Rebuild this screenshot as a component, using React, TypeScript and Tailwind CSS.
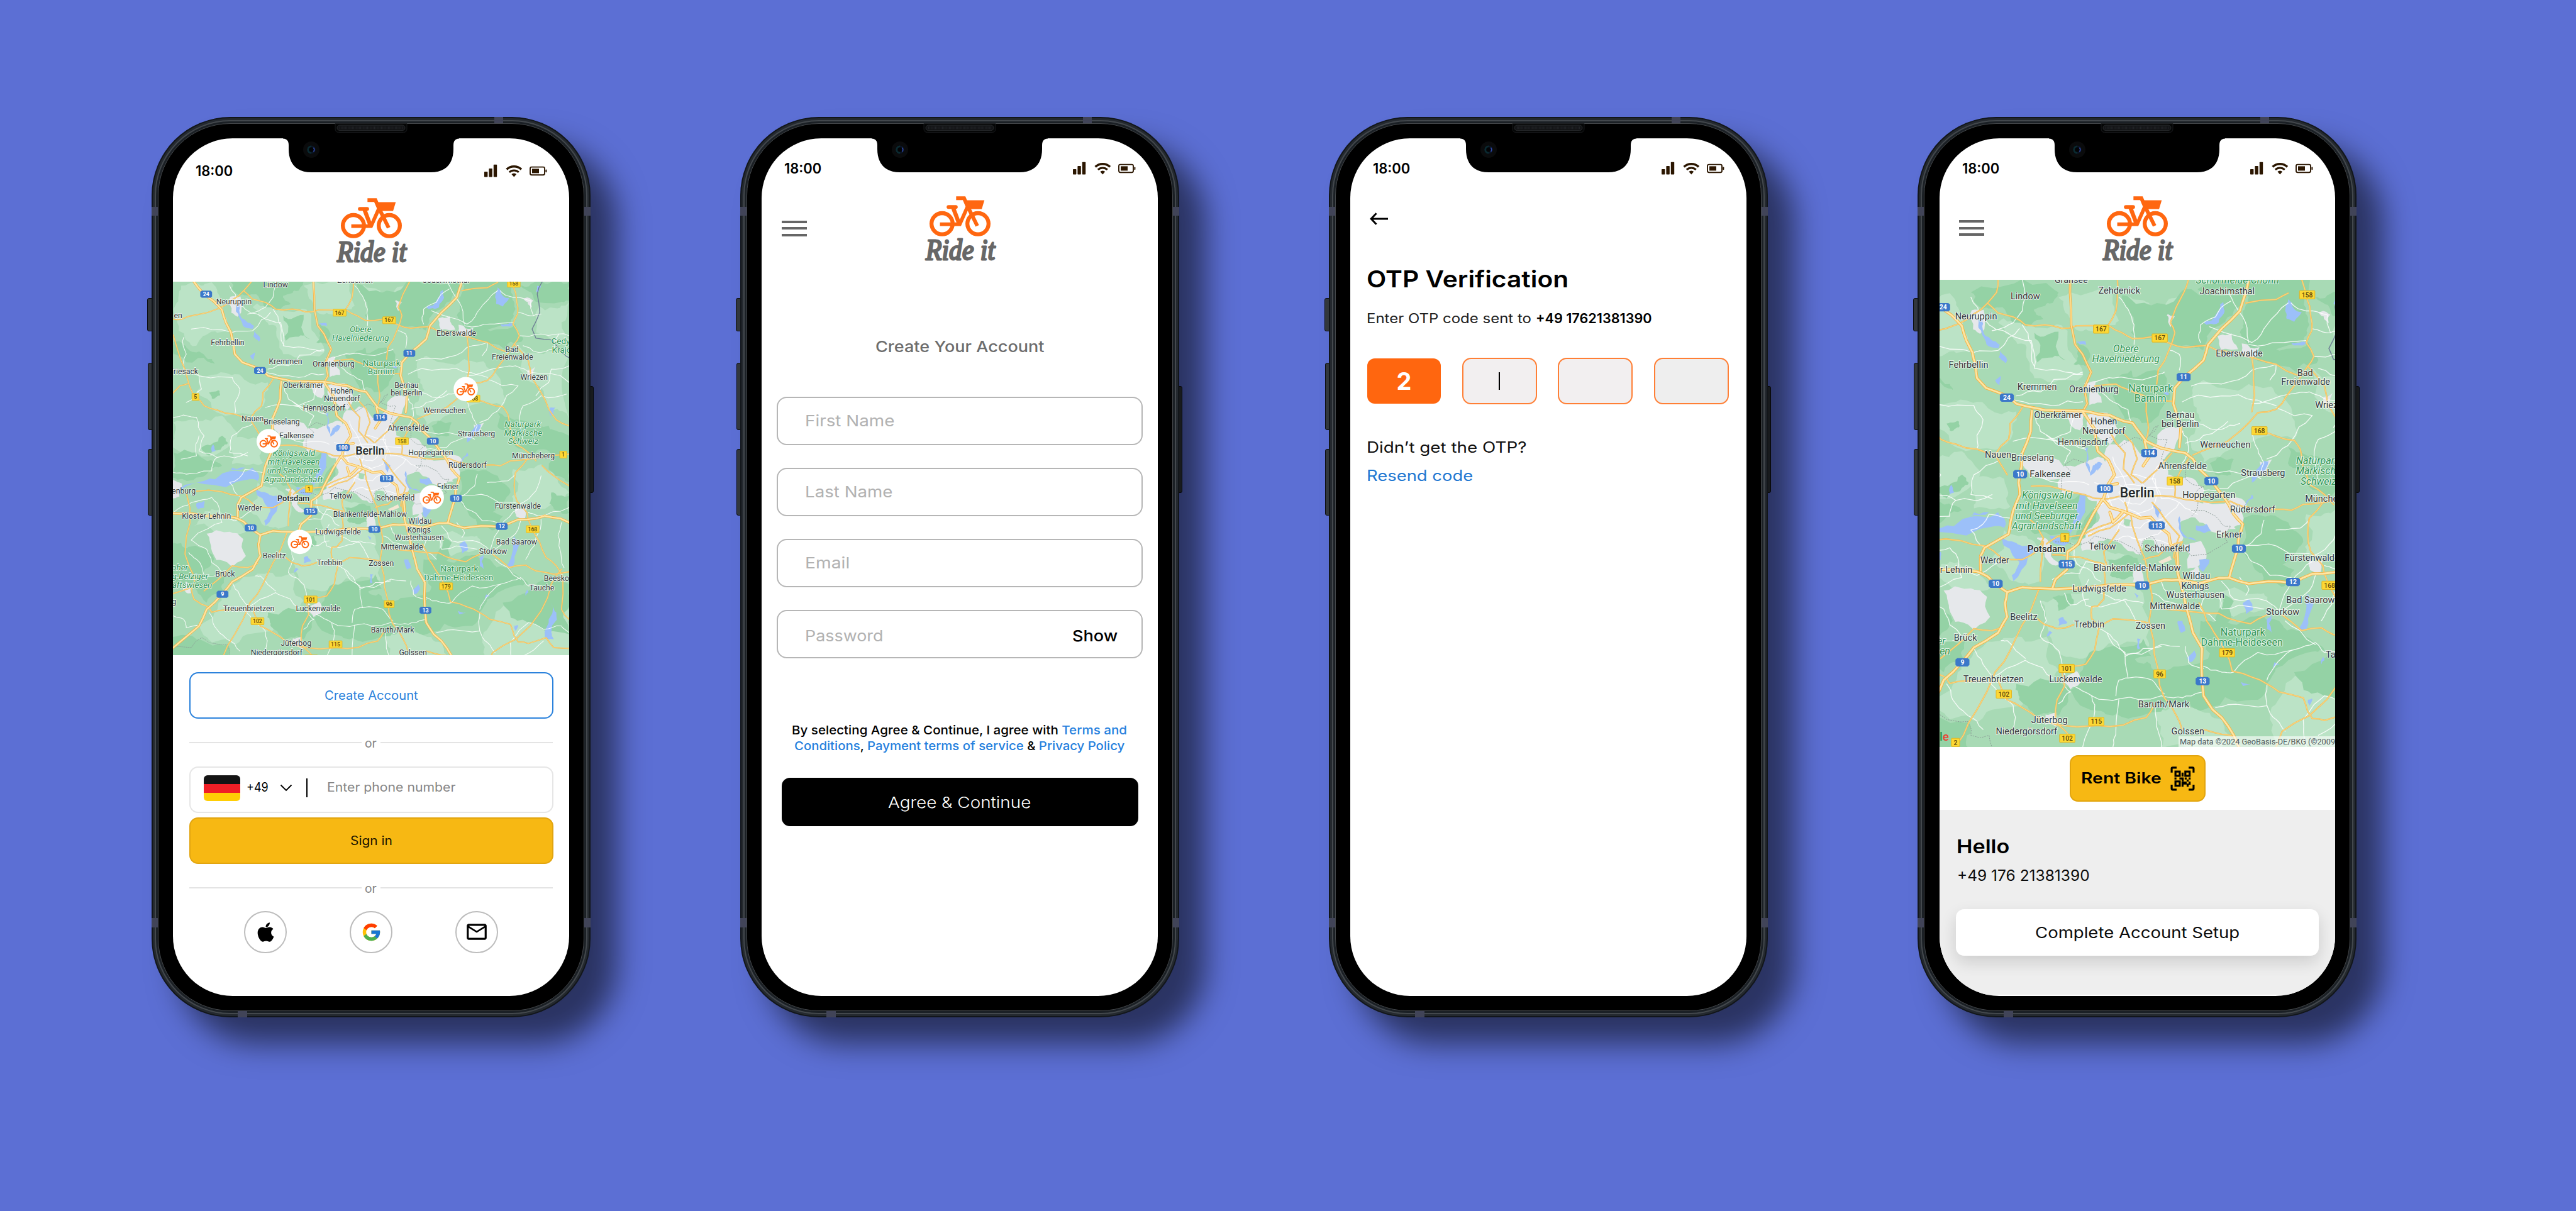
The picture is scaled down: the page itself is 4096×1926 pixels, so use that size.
import { useLayoutEffect, useRef, useState } from "react";
import type { ReactNode } from "react";
import { FaApple } from "react-icons/fa";
import { FcGoogle } from "react-icons/fc";
import { MdOutlineMailOutline } from "react-icons/md";

/* ---------- text that is widened to an exact measure ---------- */
function Fit({ w, className = "", children }: { w: number; className?: string; children: ReactNode }) {
  const ref = useRef<HTMLSpanElement>(null);
  const [scale, setScale] = useState(1);
  useLayoutEffect(() => {
    const el = ref.current;
    if (el && el.offsetWidth) setScale(w / el.offsetWidth);
  }, [w]);
  return (
    <span className={"inline-flex shrink-0 justify-start " + className} style={{ width: w }}>
      <span ref={ref} className="block shrink-0 origin-left whitespace-pre" style={{ transform: `scaleX(${scale})` }}>
        {children}
      </span>
    </span>
  );
}

/* ---------- map ---------- */
const KX = 1.96;
const KY = 3;
type Pt = [number, number];

const noise = (a: number, b: number, s: number) => {
  const v = Math.sin(a * 12.9898 + b * 78.233 + s * 37.719) * 43758.5453;
  return v - Math.floor(v) - 0.5;
};

const parse = (s: string): Pt[] => {
  const n = s.split(/[ ,]+/).map(Number);
  const out: Pt[] = [];
  for (let i = 0; i + 1 < n.length; i += 2) out.push([n[i] / KX, n[i + 1] / KY]);
  return out;
};

const rough = (pts: Pt[], amp: number, closed: boolean, depth: number): Pt[] => {
  let cur = pts;
  for (let d = 0; d < depth; d++) {
    const out: Pt[] = [];
    const len = closed ? cur.length : cur.length - 1;
    for (let i = 0; i < len; i++) {
      const a = cur[i];
      const b = cur[(i + 1) % cur.length];
      const L = Math.hypot(b[0] - a[0], b[1] - a[1]);
      out.push(a, [
        (a[0] + b[0]) / 2 + noise(a[0], b[1], 1) * L * amp,
        (a[1] + b[1]) / 2 + noise(a[1], b[0], 2) * L * amp,
      ]);
    }
    if (!closed) out.push(cur[cur.length - 1]);
    cur = out;
  }
  return cur;
};

const str = (p: Pt[]) => p.map((q) => q[0].toFixed(1) + "," + q[1].toFixed(1)).join(" ");
const area = (s: string, amp = 0.4, depth = 3) => str(rough(parse(s), amp, true, depth));
const line = (s: string, amp = 0.12, depth = 1) => str(rough(parse(s), amp, false, depth));

const LIGHT = [
  "40,60 160,40 200,230 230,330 100,420 30,330 10,200",
  "320,190 430,200 550,230 600,460 440,470 410,300",
  "110,600 250,590 380,640 350,800 180,820 100,700",
  "1000,480 1150,500 1260,560 1300,780 1150,800 1000,700 960,560",
  "200,960 340,980 360,1120 240,1130",
  "1360,420 1460,470 1560,480 1560,860 1480,800 1430,650",
  "460,1600 600,1560 800,1560 820,1830 640,1860 500,1820",
  "200,1900 330,1800 480,1780 520,1950 440,2060 300,2150 160,2200 110,2100",
  "1340,1160 1450,1130 1560,1300 1450,1400 1340,1360",
  "1040,1560 1200,1560 1230,1640 1100,1680",
  "840,2160 960,2140 1060,2200 1100,2300 860,2340",
  "520,60 700,50 720,180 620,230 560,200",
  "1440,180 1560,160 1560,400 1430,340",
  "10,880 100,870 200,840 260,1000 100,1060 0,1020",
  "560,1300 650,1310 760,1370 680,1420 580,1420",
  "740,60 820,90 840,230 770,240",
  "1290,2000 1400,1960 1560,1980 1560,2340 1280,2340 1220,2200",
  "160,1400 250,1460 300,1530 180,1540 90,1500",
  "880,80 900,200 920,60",
  "1040,560 1100,800 1000,900 950,780",
  "600,1420 780,1480 760,1700 640,1660",
  "340,1240 440,1300 460,1500 380,1500 300,1400",
];

const DARK = [
  "230,36 520,36 500,90 440,120 470,170 400,200 350,150 290,110",
  "730,50 890,90 960,20 1130,40 1100,130 1010,260 1000,330 900,300 860,260 760,240",
  "1150,60 1330,60 1350,200 1330,290 1170,320 1120,240 1130,150",
  "10,400 60,430 160,500 170,530 60,520 10,470",
  "440,240 520,235 545,380 450,390",
  "580,290 620,330 610,410 570,400",
  "1160,330 1350,285 1380,380 1310,440 1200,390",
  "1280,820 1400,880 1480,900 1500,1050 1400,1060 1320,960",
  "1370,60 1450,30 1560,36 1560,150 1440,160",
  "430,1040 590,1060 610,1150 560,1280 440,1260 380,1200",
  "10,1060 130,1100 200,1140 100,1210 0,1200",
  "640,1850 760,1880 840,1950 1000,1900 1200,1850 1280,1880 1220,2000 1160,2100 1000,2150 860,2160 700,2180 560,2050 600,1950",
  "990,1700 1110,1720 1250,1700 1330,1760 1400,1850 1280,1900 1100,1950 1000,1940",
  "380,2020 560,2040 520,2180 440,2180 390,2100",
  "10,1600 90,1620 170,1700 130,1850 0,1870",
  "90,1850 210,1800 200,1900 140,1960",
  "1130,1180 1280,1200 1330,1300 1250,1440 1170,1440 1130,1320",
  "1460,940 1560,960 1560,1240 1480,1160",
  "-40,2170 100,2180 230,2240 220,2340 -40,2340",
  "680,1390 760,1370 800,1450 740,1490 690,1470",
  "1300,1960 1500,1820 1560,1850 1560,2150 1400,2080",
  "700,560 870,450 890,560 820,700 740,680",
  "680,470 760,430 780,500 700,540",
  "1190,1450 1300,1440 1290,1500 1200,1500",
  "620,1160 660,1090 600,1280 560,1290",
  "720,1830 800,1790 830,1880 760,1920",
  "500,1580 560,1560 570,1620 520,1650",
  "120,1030 200,960 220,1010 150,1080",
  "1050,1820 1060,1560 1100,1600 1080,1760",
  "150,700 190,690 190,720 160,735",
  "1020,900 1100,880 1090,960 1040,960",
  "250,30 330,60 300,120 240,80",
  "1490,1300 1560,1320 1560,1420 1500,1400",
  "980,20 1150,-40 1350,-40 1330,60 1150,60",
];

const URBAN = [
  "690,810 760,790 790,860 840,820 850,760 900,720 930,740 900,830 860,880 880,960 960,980 1000,1040 980,1100 1030,1150 1070,1190 1100,1230 1060,1260 1000,1200 960,1170 920,1200 930,1280 900,1330 850,1350 830,1280 800,1290 790,1360 750,1340 700,1290 650,1290 600,1330 620,1240 660,1180 650,1090 600,1050 540,1060 520,1000 540,920 610,900 640,880 680,900",
  "610,500 640,490 660,590 625,600",
  "450,1280 480,1290 520,1410 490,1400",
  "145,1550 230,1540 280,1580 290,1680 240,1740 180,1700 160,1620",
  "235,130 270,130 260,240 240,220",
  "940,1320 990,1300 1000,1410 950,1430",
  "1050,260 1090,250 1110,320 1060,320",
  "400,900 520,890 540,980 430,960",
  "540,2000 580,1960 590,2010 560,2040",
  "1350,1390 1390,1400 1385,1450 1355,1440",
  "680,650 710,720 690,800 640,760 620,660",
  "560,640 600,650 590,730 560,700",
  "770,1450 800,1420 800,1500 770,1500",
  "960,1450 980,1430 1000,1480 970,1490",
  "60,1840 80,1860 75,1900 50,1880",
  "10,1230 40,1250 30,1320 10,1330",
  "1400,570 1420,560 1420,620 1405,610",
  "1000,1100 1080,1110 1130,1180 1100,1220",
  "880,150 900,160 890,200",
  "1050,1120 1110,1080 1140,1130",
  "1190,900 1220,890 1210,960 1190,940",
  "480,2180 510,2170 510,2230 480,2220",
  "600,1290 650,1290 640,1340 600,1340",
  "1385,140 1415,150 1410,180",
  "1130,300 1180,320 1170,360 1130,350",
];

const WATER = [
  "255,170 268,170 270,230 300,280 325,300 322,318 295,312 275,270 255,215",
  "325,330 350,380 345,395 322,365",
  "1065,85 1070,130 1050,190 1010,200 1000,188 1040,150 1055,95",
  "1280,70 1300,120 1325,135 1300,185 1275,170 1270,130",
  "1435,60 1450,60 1440,100 1430,95",
  "580,285 610,285 612,300 590,300",
  "310,480 330,460 325,505",
  "605,830 618,820 615,900 625,950 650,895 665,905 625,965 610,910",
  "1290,290 1340,288 1335,300 1300,305",
  "860,545 885,545 885,555",
  "640,905 660,900 650,940",
  "1200,890 1215,890 1190,960 1160,1000",
  "975,1215 1010,1210 1025,1245 1000,1255 975,1240",
  "920,1170 925,1240 990,1305 940,1280 918,1230",
  "370,1300 410,1320 440,1330 420,1370 370,1500 365,1470 390,1400 340,1320 330,1280",
  "300,1170 320,1150 345,1200 340,1230 310,1220 130,1250 30,1300 30,1285 130,1230 240,1170",
  "590,1060 610,1060 590,1200 560,1260 545,1240 585,1160",
  "100,1365 130,1350 130,1390 105,1400",
  "520,1690 535,1680 550,1710 520,1725",
  "1130,1610 1150,1590 1165,1640 1140,1665",
  "915,1700 930,1700 940,1750 925,1760",
  "780,1790 792,1790 790,1840 782,1845",
  "945,1890 970,1850 975,1880 955,1910",
  "1210,1690 1225,1670 1225,1760 1210,1740",
  "1345,1560 1365,1610 1340,1740 1315,1740 1340,1640",
  "1490,1960 1510,2020 1490,2140 1500,2180 1465,2170 1480,2060",
  "1235,1910 1250,1920 1220,1970",
  "1125,2010 1155,2020 1130,2030",
  "1345,2100 1360,2095 1350,2130",
  "1485,790 1505,790 1500,835 1485,840",
  "1160,1060 1165,1080 1130,1130",
  "490,1750 500,1760 480,1780",
  "770,1560 785,1570 780,1590",
  "1395,1880 1400,1900 1390,1920",
  "560,1290 540,1320 500,1300 490,1270 530,1280",
  "985,1390 1020,1390 1000,1450 985,1430",
  "830,1100 860,1140 850,1180",
  "165,1010 175,1050 160,1060",
  "240,1150 290,1150 220,1180",
];

const WHITE = [
  "230,60 260,160 290,200 350,240 430,280 440,420 520,430 600,450",
  "400,-30 400,130 370,190 300,230",
  "400,200 430,300 440,410",
  "80,320 200,325 240,340 320,330 390,220",
  "720,60 750,120 770,200 770,300",
  "1090,80 1040,160 990,200 990,290",
  "1080,30 1100,90 1130,160 1150,290",
  "1280,90 1210,200 1160,290 1020,210",
  "1290,90 1340,130 1410,150 1420,240",
  "1150,300 1250,290 1340,280",
  "1360,220 1420,240 1450,230",
  "50,370 60,470 50,560 110,600 240,610",
  "110,600 120,680 60,760",
  "240,610 270,680 250,760 250,830",
  "380,560 460,540 570,450 600,440",
  "370,580 500,610 600,590",
  "650,530 700,590 750,630 760,690",
  "640,490 700,470 840,460 870,440",
  "890,330 920,350 920,430",
  "960,510 1060,500 1160,430 1240,400 1220,480",
  "930,590 1060,560 1160,580 1240,610",
  "1160,600 1290,550 1350,540 1410,580 1560,640",
  "930,640 980,700 1060,730 1120,700",
  "1080,690 1000,760 940,800",
  "1160,750 1180,830 1200,900 1190,960",
  "1240,620 1360,660 1290,790 1210,880",
  "1380,780 1450,720 1550,710",
  "1380,780 1370,900 1380,1010",
  "1430,720 1480,640 1490,560 1560,540",
  "1365,360 1450,350 1560,360",
  "1380,420 1440,460 1500,440 1520,350",
  "10,850 100,850 130,960 110,1050 180,1090 300,1060",
  "180,1090 160,1170 60,1190 10,1180",
  "320,890 240,960 230,1060 300,1080",
  "440,640 460,740 540,800 610,830",
  "370,790 480,780 600,810",
  "480,760 560,840 540,900",
  "580,640 560,740 480,780",
  "430,960 520,1000 620,1010",
  "700,970 760,960 840,980 850,1060 830,1130 760,1160 700,1130 680,1050 700,970",
  "740,1010 800,1010 820,1060 790,1110 740,1100 720,1050 740,1010",
  "640,1000 760,1030 900,1030",
  "640,1130 720,1080 800,1180 870,1250",
  "700,870 730,960 760,1040 740,1160 700,1290",
  "860,900 830,980 860,1080 940,1130 980,1160",
  "620,1260 700,1200 790,1230 870,1180 920,1100",
  "940,920 1010,940 1140,960 1190,980",
  "930,740 950,820 930,900",
  "1000,1040 1080,1030 1180,960",
  "10,1420 80,1360 160,1330 190,1400 200,1480 80,1585",
  "80,1585 140,1640 160,1720 230,1800",
  "280,1330 230,1240 290,1160 360,1180",
  "180,1460 250,1470 340,1380",
  "570,1330 580,1410 640,1480 660,1500",
  "500,1490 590,1460 610,1400 680,1410",
  "620,1490 600,1560 610,1620 660,1630 740,1590 800,1610",
  "660,1560 740,1600 770,1680 780,1710",
  "540,1560 560,1620 620,1590",
  "460,1600 480,1700 460,1780 500,1820 530,1900 540,1990",
  "680,1760 740,1860 750,1990 830,2000 870,2070",
  "650,1740 700,1790 740,1870 860,1830",
  "740,1880 800,1840 920,1830",
  "10,2040 50,2060 60,2110 110,2100",
  "310,1980 410,1900 420,1910 500,1990",
  "410,1890 350,1800 330,1800",
  "240,1840 270,1920 300,1980",
  "150,2020 170,2100 220,2180 270,2250",
  "290,2000 320,2070 370,2130 370,2250",
  "540,2030 560,2060 520,2120",
  "570,2030 630,2080 720,2095 860,2080",
  "720,2095 710,2250 700,2340",
  "750,1990 720,2000 710,2080",
  "860,2080 930,2090 1000,2060",
  "1040,2140 1080,2125 1210,2130 1240,2200 1270,2260",
  "1210,2020 1210,2130",
  "1000,1930 1060,1960 1100,1960 1180,1860 1290,1850",
  "1290,1850 1370,1810 1400,1860 1490,1870",
  "1290,1850 1240,1920 1210,2000",
  "1270,1700 1370,1820",
  "1130,1330 1160,1400 1220,1470 1290,1480",
  "1100,1330 1240,1320 1350,1360",
  "1360,1400 1290,1500 1250,1650",
  "1400,1420 1440,1440 1560,1390",
  "1370,1470 1340,1560 1260,1650",
  "1060,1500 1100,1590 1210,1600 1260,1660",
  "1050,1580 1060,1640 1200,1640",
  "1000,1570 990,1640 1040,1700",
  "860,1500 880,1560 930,1580",
  "830,1560 870,1600 930,1620",
  "1240,1240 1320,1230 1350,1190",
  "1200,1190 1190,1260 1120,1330",
  "1450,1200 1430,1290 1360,1370",
  "1450,1460 1430,1570 1390,1700",
  "1530,1480 1520,1620 1540,1750",
  "1400,2080 1330,2200 1340,2340",
  "1400,2080 1460,2120 1530,2100 1560,2140",
  "1460,2190 1380,2280",
  "840,2130 850,2260 860,2340",
  "630,2080 640,2160 600,2340",
  "940,1830 950,1910 1000,1940",
  "70,1660 100,1700 130,1800 200,1800",
  "1120,1480 1150,1540 1140,1570",
  "40,1100 100,1080 110,960",
  "690,1290 750,1270 830,1290 900,1310",
  "880,1200 850,1260 760,1280",
];

const DASH = [
  "690,770 720,820 770,770 800,790 830,740 850,710 820,760 880,780 860,880 940,920 940,980 1000,1020 970,1060 980,1130 960,1170",
  "530,1080 530,980 560,940 540,910 570,880 610,900",
  "960,1140 1040,1170 1060,1210 1090,1220 1060,1260 1080,1300 960,1370 920,1310",
  "510,1300 580,1320 640,1270 700,1290 740,1310 790,1365 800,1290 830,1270 850,1330 920,1320",
  "10,2225 80,2230 120,2170 150,2200 220,2210 230,2280 290,2280 300,2340",
];

const YELLOW = [
  "320,-30 315,36 285,90 235,150 190,195 100,235 40,262 0,258",
  "285,90 320,140 370,160 410,200 475,200 530,218 580,205 690,208 730,240 765,270 830,260 890,295 940,315 1010,305 1045,330 1160,365 1240,400 1310,455",
  "715,-30 715,36 710,130 685,200",
  "950,-30 935,36 890,190 905,240 885,330 850,430 845,500",
  "640,510 710,500 745,525 805,560 810,640 818,720 805,800",
  "820,585 900,588",
  "1140,90 1240,72 1280,40",
  "1325,-30 1340,60 1355,160 1358,230 1340,290 1365,360 1345,410 1310,490 1275,560 1240,628 1180,645 1120,740 1080,790 1020,825 965,860",
  "1160,365 1165,480 1160,640",
  "1345,410 1400,510 1410,600 1450,700 1480,800 1510,865 1560,900",
  "1195,745 1240,765 1300,785 1320,830 1330,930 1350,1010 1400,1060 1430,1110",
  "430,1018 490,1018 570,1050 640,1080 720,1070 860,1065 940,1085 1090,1095 1130,1120 1235,1135 1290,1140 1330,1110 1400,1100 1560,1070",
  "1395,1100 1350,1180 1345,1260 1355,1350 1395,1420",
  "0,340 10,360 40,510 65,620 90,720 130,780 180,805 250,830 310,860 330,910 350,960",
  "400,620 360,700 355,780 310,860",
  "0,715 35,660 70,645",
  "100,1292 200,1295 275,1320 330,1380 400,1390 455,1340 470,1280 450,1220 420,1180",
  "480,1310 520,1270 600,1265 660,1220 705,1195 735,1145",
  "470,1300 465,1380 460,1500",
  "500,1365 560,1375 610,1385 670,1410 675,1500 670,1590 650,1625 630,1630 630,1690 655,1730 640,1850 610,1920 570,1930 530,1950 540,2030 515,2100 510,2200 520,2228 560,2290",
  "455,1540 430,1640 400,1720 360,1850 310,1960 250,2150 205,2280 180,2340",
  "450,1690 475,1720 515,1740 570,1720",
  "655,1730 700,1690 780,1700 815,1710",
  "760,1160 765,1220 790,1330 805,1380 815,1480 830,1580 820,1700 835,1800 850,1950 870,2090 910,2180 930,2260",
  "1000,1660 1050,1662 1110,1700 1155,1715 1210,1670",
  "870,1640 1000,1660",
  "985,1610 1010,1700 1035,1760 1070,1850 1095,1955 1160,1985 1210,2020 1250,2060 1330,2090 1345,2160 1360,2195 1400,2205 1470,2170 1500,2230 1560,2235",
  "1260,1670 1325,1750 1390,1735 1430,1770 1500,1790 1560,1775",
  "1395,1420 1410,1500 1445,1600 1470,1690 1510,1740 1535,1810",
  "1530,1760 1490,1850 1450,2010 1350,2180 1260,2260 1240,2340",
  "1535,1820 1530,2000 1560,2060",
  "150,1990 160,2018 210,2005 270,2000",
  "0,1910 80,1870 90,1940 120,1970 150,1990",
  "60,1300 75,1480 55,1670 90,1800 90,1870",
  "130,1890 240,1740 300,1750 340,1725",
  "320,2000 350,2100 400,2140 450,2190 520,2230",
  "520,2228 650,2230 735,2228 810,2190 835,2130",
  "1000,2250 1060,2275 1100,2285",
  "895,850 850,930 800,1000",
  "690,740 740,850 735,930 770,1000",
  "730,740 765,800 780,880 760,960 795,1000",
  "950,880 905,1000 905,1070",
  "1455,1140 1500,1200 1560,1260",
  "740,1100 750,1160 690,1230 620,1270",
  "830,1100 870,1180 920,1270 900,1380",
  "720,1240 670,1350 680,1420",
  "800,1390 850,1370 880,1330 930,1300",
  "930,1300 905,1380 915,1450",
];

const MOTORWAY = [
  "60,-40 90,36 130,110 165,150 200,205 215,280 235,340 245,400 250,470 280,520 350,560 380,600 420,615 475,632 600,636 650,652 690,658 735,688 765,697 790,750 810,790 860,825 940,850 965,880 985,930 1026,990 1050,1040 1085,1115 1100,1160 1130,1210 1115,1290 1115,1330 1100,1400 1085,1480",
  "0,1425 70,1425 140,1440 250,1450 285,1475 315,1515 350,1555 400,1530 460,1535 560,1535 680,1520 800,1520 870,1492 920,1492 985,1510 1050,1483 1085,1482 1150,1512 1215,1500 1295,1508 1360,1462 1430,1455 1465,1440 1525,1455 1560,1480",
  "432,635 428,740 400,850 397,920 388,1000 392,1060 370,1140 355,1260 275,1330 262,1370 262,1445",
  "350,1555 343,1610 350,1680 320,1760 240,1835 200,1910 140,2000 110,2100 40,2190 0,2240",
  "1150,-40 1140,36 1120,130 1060,220 1015,300 1000,380 935,465 905,520 900,600 915,680 925,720 920,820",
  "665,1085 610,1230 585,1310 550,1350 548,1440 510,1490 500,1535",
  "600,640 640,730 650,840 685,885 705,960 680,1020 668,1085 690,1125 735,1145 790,1180 825,1175 850,1220 885,1260 890,1310 912,1340 915,1460 935,1570 950,1670 965,1760 995,1840 995,2000 1000,2080 1030,2150 1060,2190 1100,2280 1120,2350",
  "800,915 820,870 805,790",
  "735,1145 700,1200 690,1150",
  "690,1010 715,1005",
];

const TRUNK = ["558,-40 558,36 562,200 575,300 600,350 628,440 605,520 615,600 600,640"];

const TOWNS: [number, number, string][] = [
  [410, 55, "Lindow"], [247, 157, "Neuruppin"], [28, 240, "en"], [1118, 345, "Eberswalde"],
  [222, 402, "Fehrbellin"], [1336, 443, "Bad"], [1338, 488, "Freienwalde"], [449, 512, "Kremmen"],
  [637, 527, "Oranienburg"], [50, 573, "Friesack"], [1423, 607, "Wriezen"], [518, 658, "Oberkrämer"],
  [670, 690, "Hohen"], [670, 735, "Neuendorf"], [923, 657, "Bernau"], [923, 701, "bei Berlin"],
  [600, 793, "Hennigsdorf"], [1072, 806, "Werneuchen"], [320, 857, "Nauen"], [434, 874, "Brieselang"],
  [930, 914, "Ahrensfelde"], [492, 957, "Falkensee"], [1197, 949, "Strausberg"], [1018, 1062, "Hoppegarten"],
  [1420, 1080, "Müncheberg"], [1162, 1134, "Rüdersdorf"], [665, 1322, "Teltow"], [880, 1332, "Schönefeld"],
  [1085, 1262, "Erkner"], [50, 1292, "enburg"], [309, 1393, "Werder"], [139, 1442, "Kloster Lehnin"],
  [780, 1431, "Blankenfelde-Mahlow"], [1359, 1380, "Fürstenwalde"], [976, 1472, "Wildau"],
  [972, 1524, "Königs"], [973, 1568, "Wusterhausen"], [655, 1535, "Ludwigsfelde"], [905, 1626, "Mittenwalde"],
  [1354, 1594, "Bad Saarow"], [1262, 1653, "Storkow"], [405, 1679, "Beelitz"], [622, 1718, "Trebbin"],
  [824, 1725, "Zossen"], [212, 1786, "Brück"], [1522, 1814, "Beeskow"], [1453, 1870, "Tauche"],
  [305, 1996, "Treuenbrietzen"], [577, 1994, "Luckenwalde"], [868, 2123, "Baruth/Mark"],
  [490, 2203, "Jüterbog"], [414, 2259, "Niedergörsdorf"], [948, 2258, "Golssen"],
  [562, -27, "Gransee"], [721, 27, "Zehdenick"], [1078, 28, "Joachimsthal"], [12, 1952, "g"],
];

const PARKS: [number, number, string, boolean][] = [
  [743, 320, "Obere", true], [743, 372, "Havelniederung", true], [825, 522, "Naturpark", false], [824, 573, "Barnim", false],
  [482, 1064, "Königswald", true], [481, 1116, "mit Havelseen", true], [481, 1168, "und Seeburger", true], [480, 1220, "Agrarlandschaft", true],
  [1378, 888, "Naturpark", true], [1380, 940, "Märkische", true], [1380, 992, "Schweiz", true],
  [1130, 1756, "Naturpark", false], [1127, 1808, "Dahme-Heideseen", false],
  [35, 1750, "oher", true], [75, 1802, "g-Belziger", true], [83, 1854, "aftswiesen", true],
  [1536, 393, "Cedyń", false], [1540, 445, "Krajob", false], [1112, -28, "Schorfheide-Chorin", true],
];

const BLUE: [number, number, string][] = [
  [138, 111, "24"], [349, 569, "24"], [934, 465, "11"], [820, 850, "114"], [674, 1030, "100"], [1026, 992, "10"],
  [845, 1217, "113"], [1117, 1334, "10"], [547, 1413, "115"], [312, 1512, "10"], [797, 1521, "10"],
  [1296, 1503, "12"], [202, 1910, "9"], [997, 2006, "13"], [393, 957, "10"],
];

const GOLD: [number, number, string][] = [
  [661, 222, "167"], [855, 267, "167"], [1343, 48, "158"], [1185, 737, "168"], [96, 727, "5"], [905, 992, "158"],
  [1537, 1073, "1"], [541, 1278, "1"], [1417, 1520, "168"], [1078, 1862, "179"], [547, 1941, "101"],
  [855, 1969, "96"], [339, 2071, "102"], [645, 2210, "115"], [549, 2295, "102"], [179, 2316, "2"],
];

const PINS: [number, number][] = [[1155, 680], [383, 992], [1022, 1329], [505, 1596]];

function MapView({ viewBox, pins, className }: { viewBox: string; pins?: boolean; className: string }) {
  const halo = { paintOrder: "stroke" as const, stroke: "#f4faf6", strokeOpacity: 0.85, strokeWidth: 2.2, strokeLinejoin: "round" as const };
  return (
    <svg viewBox={viewBox} preserveAspectRatio="none" className={className}>
      <rect x="-20" y="-30" width="860" height="840" fill="#a8dab5" />
      {LIGHT.map((s) => <polygon key={s} points={area(s)} fill="#bbe3c6" />)}
      {DARK.map((s) => <polygon key={s} points={area(s)} fill="#94d2a5" />)}
      {URBAN.map((s) => <polygon key={s} points={area(s, 0.35, 2)} fill="#e6e8eb" stroke="#e6e8eb" strokeWidth="3" />)}
      <polygon points={area("850,1400 890,1370 895,1390 860,1410", 0.2, 1)} fill="#f4e5d2" />
      <polygon points={area("735,1180 760,1190 755,1220 735,1210", 0.3, 1)} fill="#a8dab5" />
      {WATER.map((s) => <polygon key={s} points={area(s, 0.3, 2)} fill="#9cc0f9" />)}
      <g fill="none" strokeLinejoin="round" strokeLinecap="round">
        <polyline points={line("1455,36 1435,110 1445,220 1415,320 1430,375 1490,385 1530,460 1570,500")} stroke="#6f7f95" strokeWidth="1.7" />
        {WHITE.map((s) => <polyline key={s} points={line(s, 0.22, 2)} stroke="#ffffff" strokeOpacity="0.85" strokeWidth="1.4" />)}
        {DASH.map((s) => <polyline key={s} points={line(s, 0.3)} stroke="#8a9a95" strokeWidth="1" strokeDasharray="1.5 2.6" />)}
        {YELLOW.map((s) => <polyline key={s} points={line(s)} stroke="#f0b94f" strokeWidth="2.5" />)}
        {YELLOW.map((s) => <polyline key={s} points={line(s)} stroke="#fad27c" strokeWidth="1.6" />)}
        {TRUNK.map((s) => <polyline key={s} points={line(s, 0.05)} stroke="#f3b347" strokeWidth="4" />)}
        {TRUNK.map((s) => <polyline key={s} points={line(s, 0.05)} stroke="#fcdf96" strokeWidth="2" />)}
        {MOTORWAY.map((s) => <polyline key={s} points={line(s, 0.05)} stroke="#f5b342" strokeWidth="5" />)}
        {MOTORWAY.map((s) => <polyline key={s} points={line(s, 0.05)} stroke="#fee5a3" strokeWidth="3" />)}
      </g>
      <g fontFamily="Roboto, sans-serif" textAnchor="middle">
        {GOLD.map(([x, y, t]) => (
          <g key={x + "-" + y}>
            <rect x={x / KX - (t.length === 1 ? 7 : t.length === 2 ? 10 : 13)} y={y / KY - 7} width={t.length === 1 ? 14 : t.length === 2 ? 20 : 26} height="14" rx="1" fill="#fdd835" stroke="#e0b420" strokeWidth="1" />
            <text x={x / KX} y={y / KY + 4} fontSize="11" fontWeight="500" fill="#5d4a0c">{t}</text>
          </g>
        ))}
        {BLUE.map(([x, y, t]) => {
          const cx = x / KX;
          const cy = y / KY;
          const h = t.length === 3 ? 13.5 : 11.8;
          return (
            <g key={x + "-" + y}>
              <path d={`M${cx - h + 3} ${cy - 7}H${cx + h - 3}L${cx + h} ${cy - 4.5}V${cy + 4.5}L${cx + h - 3} ${cy + 7}H${cx - h + 3}L${cx - h} ${cy + 4.5}V${cy - 4.5}Z`} fill="#3b78c9" />
              <text x={cx} y={cy + 4} fontSize="11" fontWeight="700" fill="#ffffff">{t}</text>
            </g>
          );
        })}
        {PARKS.map(([x, y, t, it]) => (
          <text key={x + "-" + y} x={x / KX} y={y / KY + 6} fontSize="17" fontStyle={it ? "italic" : "normal"} fill="#2f9654" {...halo}>{t}</text>
        ))}
        {TOWNS.map(([x, y, t]) => (
          <text key={x + "-" + y} x={x / KX} y={y / KY + 5.4} fontSize="15.4" fill="#33393c" {...halo}>{t}</text>
        ))}
        <text x={480 / KX} y={1335 / KY + 5.4} fontSize="16" fontWeight="500" fill="#202427" {...halo}>Potsdam</text>
        <text x={780 / KX} y={1050 / KY + 8} fontSize="22.5" fontWeight="500" fill="#202427" {...halo} strokeWidth={3}>Berlin</text>
      </g>
      {pins && PINS.map(([x, y]) => (
        <g key={x}>
          <circle cx={x / KX} cy={y / KY} r="24.3" fill="#ffffff" />
          <g transform={`translate(${x / KX - 18.4} ${y / KY - 11.5}) scale(0.1) translate(-57 -45)`}><BikeShape /></g>
        </g>
      ))}
    </svg>
  );
}

/* ---------- logo ---------- */
function BikeShape() {
  return (
    <g fill="none" stroke="#ff6710">
      <circle cx="133" cy="211" r="64" strokeWidth="24" />
      <circle cx="350" cy="211" r="64" strokeWidth="24" />
      <path d="M172 110H216" strokeWidth="23" strokeLinecap="round" />
      <path d="M199 112L236 210" strokeWidth="25" />
      <path d="M120 214H240L287 108" strokeWidth="22" />
      <path d="M218 57H266L286 103L346 224" strokeWidth="23" />
      <path d="M276 69H389L373 122H298L276 100Z" fill="#ff6710" stroke="none" />
    </g>
  );
}

function Logo() {
  return (
    <div className="flex flex-col items-center">
      <svg viewBox="57 45 369 242" className="h-[64px] w-[97px]"><BikeShape /></svg>
      <svg viewBox="0 0 115 42" className="mt-[2px] h-[42px] w-[115px] overflow-visible">
        <text x="3" y="35" textLength="110" lengthAdjust="spacingAndGlyphs" fontFamily="'Liberation Serif', serif" fontStyle="italic" fontSize="46" fill="#676767" stroke="#676767" strokeWidth="2.8" strokeLinejoin="round" strokeLinecap="round">Ride it</text>
      </svg>
    </div>
  );
}

/* ---------- phone ---------- */
function StatusBar({ low }: { low?: boolean }) {
  return (
    <div className={(low ? "pt-[40px]" : "pt-[36px]") + " flex items-start justify-between pr-[35px] pl-[36px]"}>
      <div className="flex h-[24px] items-center">
        <Fit w={59.5} className="text-[22.5px] leading-none font-semibold text-black">18:00</Fit>
      </div>
      <svg viewBox="0 0 100 24" className="h-[24px] w-[100px]">
        <g fill="#2b1600">
          <rect x="0" y="13" width="5.4" height="8.6" rx="0.8" />
          <rect x="7.4" y="8" width="5.4" height="13.6" rx="0.8" />
          <rect x="14.8" y="1.8" width="5.4" height="19.8" rx="0.8" />
          <path d="M47.3 21.4L43.4 17a5.8 5.8 0 0 1 7.8 0Z" />
        </g>
        <g fill="none" stroke="#2b1600" strokeWidth="3.6">
          <path d="M35.6 9.4a17 17 0 0 1 23.4 0" />
          <path d="M39.8 13.9a11 11 0 0 1 15 0" strokeWidth="3" />
          <rect x="73" y="5.6" width="23" height="12.6" rx="2.4" strokeWidth="1.9" />
        </g>
        <rect x="76" y="8.4" width="11" height="7" fill="#2b1600" />
        <rect x="97.4" y="9.6" width="2" height="4.6" rx="1" fill="#2b1600" />
      </svg>
    </div>
  );
}

function Burger() {
  return (
    <div className="flex w-[40px] flex-col gap-[6.5px]">
      <div className="h-[4px] bg-[#666666]" />
      <div className="h-[4px] bg-[#666666]" />
      <div className="h-[4px] bg-[#666666]" />
    </div>
  );
}

function Phone({ children, narrow }: { children: ReactNode; narrow?: boolean }) {
  return (
    <div className="relative h-[1432px] w-[698px] shrink-0">
      <div className="absolute top-[288px] -left-[7px] h-[53px] w-[9px] rounded-l-[3px] border border-[#0c0e12] bg-[#33383e]" />
      <div className="absolute top-[391px] -left-[6px] h-[107px] w-[8px] rounded-l-[3px] border border-[#0c0e12] bg-[#33383e]" />
      <div className="absolute top-[528px] -left-[6px] h-[106px] w-[8px] rounded-l-[3px] border border-[#0c0e12] bg-[#33383e]" />
      <div className="absolute top-[428px] -right-[5px] h-[170px] w-[8px] rounded-r-[3px] border border-[#0c0e12] bg-[#33383e]" />
      <div className="relative h-full w-full overflow-hidden rounded-[125px] bg-[#12161a] p-[2px] shadow-[42px_42px_48px_rgba(0,0,0,0.54)]">
        <div className="h-full w-full rounded-[123px] bg-[#24292f] p-[3px]">
          <div className="h-full w-full rounded-[120px] bg-[#43484d] p-[2px]">
            <div className="h-full w-full rounded-[118px] bg-[#1b2025] p-[3px]">
              <div className="flex h-full w-full justify-center rounded-[115px] border border-[#44474a] bg-black py-[23px]">
                <div className={(narrow ? "ml-[1px] w-[629px]" : "w-[630px]") + " relative flex h-[1364px] shrink-0 flex-col overflow-hidden rounded-[95px] bg-white"}>
                  {children}
                </div>
              </div>
            </div>
          </div>
        </div>
        <div className="absolute top-[143px] left-0 h-[14px] w-[10px] bg-[#414458]" />
        <div className="absolute top-[143px] right-0 h-[14px] w-[10px] bg-[#414458]" />
        <div className="absolute bottom-[143px] left-0 h-[15px] w-[10px] bg-[#414458]" />
        <div className="absolute right-0 bottom-[143px] h-[15px] w-[10px] bg-[#414458]" />
        <div className="absolute top-0 right-[139px] h-[10px] w-[14px] bg-[#414458]" />
        <div className="absolute bottom-0 left-[137px] h-[10px] w-[15px] bg-[#414458]" />
      </div>
      <svg viewBox="0 0 280 90" className="absolute top-[6px] left-[209px] h-[90px] w-[280px]">
        <path d="M0 27H280V28.5C274 28.5 271 32 271 39V45C271 68 259 82 235 82H45C21 82 9 68 9 45V39C9 32 6 28.5 0 28.5Z" fill="#000000" />
        <path d="M83 4.5V13Q83 18.5 88.5 18.5H191.5Q197 18.5 197 13V4.5Z" fill="#050606" stroke="#1d2022" strokeWidth="0.8" />
        <rect x="86" y="7" width="108" height="8.6" rx="4.3" fill="#131416" stroke="#303336" strokeWidth="0.7" />
        <path d="M90 11.3H190" stroke="#222427" strokeWidth="4" strokeDasharray="1 1.2" />
        <circle cx="45" cy="46" r="13" fill="#0a0b0c" />
        <circle cx="45" cy="46" r="6.6" fill="#0b1424" />
        <path d="M45 39.4A6.6 6.6 0 0 0 45 52.6Z" fill="#0a2a30" />
        <circle cx="45" cy="46" r="3.8" fill="#020305" />
        <path d="M48.4 42.8A4.6 4.6 0 0 1 48.4 49.2" stroke="#3048a8" strokeWidth="1.8" fill="none" />
      </svg>
    </div>
  );
}

/* ---------- screens ---------- */
function OrRow() {
  return (
    <div className="flex h-[76.5px] items-center justify-between">
      <div className="h-[2px] w-[274px] bg-[#e4e4e4]" />
      <Fit w={19.3} className="pt-[2px] text-[20px] leading-none text-[#858585]">or</Fit>
      <div className="h-[2px] w-[274px] bg-[#e4e4e4]" />
    </div>
  );
}

function SignIn() {
  return (
    <Phone>
      <div className="flex h-[227.5px] flex-col">
        <StatusBar low />
        <div className="mt-[31px] flex justify-center"><Logo /></div>
      </div>
      <MapView viewBox="4 12 792 747" pins className="h-[594.5px] w-[630px] shrink-0" />
      <div className="mx-[25.5px] mt-[26.5px] flex flex-col">
        <div className="flex h-[74px] items-center justify-center rounded-[14px] border-2 border-[#2b82dc]">
          <Fit w={149} className="pt-[2px] text-[19.5px] leading-none text-[#2b82dc]">Create Account</Fit>
        </div>
        <OrRow />
        <div className="flex h-[74px] items-center rounded-[14px] border-2 border-[#e6e6e6] pb-[6px] pl-[21px]">
          <div className="flex h-[41px] w-[58px] flex-col overflow-hidden rounded-[6px]">
            <div className="flex-1 bg-[#141414]" />
            <div className="flex-1 bg-[#f01f26]" />
            <div className="h-[12.5px] bg-[#ffce05]" />
          </div>
          <Fit w={35} className="ml-[10px] text-[19.5px] leading-none text-black">+49</Fit>
          <svg viewBox="0 0 20 12" className="ml-[18px] h-[12px] w-[20px]">
            <path d="M1.5 1.5L10 10L18.5 1.5" fill="none" stroke="#000" strokeWidth="1.9" />
          </svg>
          <div className="ml-[22px] h-[30px] w-[2px] bg-black" />
          <Fit w={204.5} className="ml-[31px] text-[19.5px] leading-none text-[#858585]">Enter phone number</Fit>
        </div>
        <div className="mt-[6.5px] flex h-[74.5px] items-center justify-center rounded-[14px] border-2 border-[#e2a50f] bg-[#f7b813]">
          <Fit w={66.5} className="pt-[2px] text-[19.5px] leading-none text-[#1c1400]">Sign in</Fit>
        </div>
        <OrRow />
        <div className="-mt-[2px] flex justify-center gap-[100.5px]">
          <div className="flex size-[67.5px] items-center justify-center rounded-full border-2 border-[#bdbdbd]">
            <FaApple className="size-[35px] text-black" />
          </div>
          <div className="flex size-[67.5px] items-center justify-center rounded-full border-2 border-[#bdbdbd]">
            <FcGoogle className="size-[33px]" />
          </div>
          <div className="flex size-[67.5px] items-center justify-center rounded-full border-2 border-[#bdbdbd]">
            <MdOutlineMailOutline className="size-[38px] text-black" />
          </div>
        </div>
      </div>
    </Phone>
  );
}

function Field({ label, w, action }: { label: string; w: number; action?: boolean }) {
  return (
    <div className="flex h-[77px] items-center justify-between rounded-[16px] border-2 border-[#b6b6b6] pr-[38px] pl-[43px]">
      <Fit w={w} className={(action ? "pt-[5px]" : "") + " text-[24.5px] leading-none text-[#b2b2b2]"}>{label}</Fit>
      {action && <Fit w={72} className="pt-[5px] text-[24.5px] leading-none font-medium text-black">Show</Fit>}
    </div>
  );
}

function CreateAccount() {
  return (
    <Phone>
      <div className="flex h-[227.5px] flex-col">
        <StatusBar />
        <div className="mt-[32px] grid grid-cols-3 pr-[31px] pl-[32px]">
          <div className="pt-[38.5px]"><Burger /></div>
          <div className="flex justify-center"><Logo /></div>
        </div>
      </div>
      <div className="mt-[89px] flex h-[30px] items-center justify-center">
        <Fit w={268.5} className="text-[24.5px] leading-none font-medium text-[#6d6d6d]">Create Your Account</Fit>
      </div>
      <div className="mx-[24px] mt-[64px] flex flex-col gap-[36.3px]">
        <Field label="First Name" w={142} />
        <Field label="Last Name" w={139} />
        <Field label="Email" w={71.5} />
        <Field label="Password" w={124} action />
      </div>
      <div className="mt-[103px] flex flex-col items-center text-[19px] leading-[24.2px] font-medium text-black">
        <Fit w={533.5}>By selecting Agree &amp; Continue, I agree with <span className="text-[#2580de]">Terms and</span></Fit>
        <Fit w={525.5}><span className="text-[#2580de]">Conditions</span>, <span className="text-[#2580de]">Payment terms of service</span> &amp; <span className="text-[#2580de]">Privacy Policy</span></Fit>
      </div>
      <div className="mx-[31.5px] mt-[38px] flex h-[77.5px] items-center justify-center rounded-[13px] bg-black">
        <Fit w={227.5} className="pt-[1px] text-[24.5px] leading-none font-light text-white">Agree &amp; Continue</Fit>
      </div>
    </Phone>
  );
}

function Otp() {
  return (
    <Phone>
      <StatusBar />
      <svg viewBox="0 0 30 20" className="mt-[58px] ml-[31px] h-[20px] w-[30px]">
        <path d="M29 10H2.5M10.5 1.2L2.2 10L10.5 18.8" fill="none" stroke="#000" strokeWidth="3" />
      </svg>
      <div className="mt-[65.5px] flex h-[40px] items-center pl-[26px]">
        <Fit w={321.5} className="text-[37px] leading-none font-semibold text-black">OTP Verification</Fit>
      </div>
      <div className="mt-[28px] flex h-[30px] items-center pl-[26px]">
        <Fit w={262} className="text-[21.5px] leading-none text-[#1d1d1d]">Enter OTP code sent to</Fit>
        <Fit w={185} className="ml-[6.5px] text-[21.5px] leading-none font-semibold text-black">+49 17621381390</Fit>
      </div>
      <div className="mt-[47px] flex h-[74px] justify-between pr-[28px] pl-[27px]">
        <div className="my-[1px] flex w-[117px] items-center justify-center rounded-[12px] bg-[#ff660f] text-[38px] leading-none font-bold text-white">2</div>
        <div className="flex w-[119px] items-center justify-center rounded-[14px] border-2 border-[#ff7f35] bg-[#f2eff0]">
          <div className="h-[28px] w-[2px] bg-black" />
        </div>
        <div className="w-[119px] rounded-[14px] border-2 border-[#ff7f35] bg-[#f2eff0]" />
        <div className="w-[119px] rounded-[14px] border-2 border-[#ff7f35] bg-[#eeeeee]" />
      </div>
      <div className="mt-[54px] flex h-[30px] items-center pl-[26px]">
        <Fit w={255} className="text-[24px] leading-none text-[#101010]">Didn’t get the OTP?</Fit>
      </div>
      <div className="mt-[15.5px] flex h-[30px] items-center pl-[26px]">
        <Fit w={169} className="text-[24px] leading-none text-[#1f78d2]">Resend code</Fit>
      </div>
    </Phone>
  );
}

function QrScan() {
  return (
    <svg viewBox="44 27 149 149" className="h-[39px] w-[39px]">
      <g fill="none" stroke="#000" strokeWidth="12">
        <path d="M52 64V40Q52 34 58 34H82" />
        <path d="M155 34H179Q185 34 185 40V64" />
        <path d="M185 138V162Q185 168 179 168H155" />
        <path d="M82 168H58Q52 168 52 162V138" />
        <rect x="75" y="58" width="26" height="26" />
        <rect x="135" y="58" width="26" height="26" />
        <rect x="75" y="118" width="26" height="26" />
      </g>
      <path d="M112 64h12v24h-12ZM69 94h12v12h-12ZM99 94h26v24h-12v-12h-14ZM131 94h12v12h-12ZM155 94h12v12h-12ZM143 106h12v13h-12ZM112 119h31v12h-12v6h-7v13h-12ZM155 119h12v19h-12ZM143 131h12v19h-12ZM131 137h12v-6h-12Z" fill="#000" />
    </svg>
  );
}

function Home() {
  return (
    <Phone narrow>
      <div className="flex h-[225px] flex-col">
        <StatusBar />
        <div className="mt-[32px] grid grid-cols-3 pr-[31px] pl-[31px]">
          <div className="pt-[38px]"><Burger /></div>
          <div className="flex justify-center"><Logo /></div>
        </div>
      </div>
      <div className="relative h-[743px] w-[629px] shrink-0 overflow-hidden">
        <MapView viewBox="64.4 -9.3 668 789" className="h-[743px] w-[629px]" />
        <div className="absolute right-0 bottom-0 flex h-[17px] w-[249px] items-center overflow-hidden bg-white/60 pl-[2px] font-['Roboto']">
          <Fit w={247} className="text-[13.5px] leading-none text-[#50585c]">Map data ©2024 GeoBasis-DE/BKG (©2009</Fit>
        </div>
        <div className="absolute bottom-[7px] left-0 font-['Roboto'] text-[19px] leading-none font-medium">
          <span className="text-[#2f9654]">l</span><span className="text-[#ea4335]">e</span>
        </div>
      </div>
      <div className="flex h-[100px] items-center justify-center">
        <div className="flex h-[74px] w-[216px] items-center justify-between rounded-[13px] border-2 border-[#e2a50f] bg-[#f7b813] pr-[15px] pl-[16px]">
          <Fit w={127.5} className="text-[24px] leading-none font-semibold text-black">Rent Bike</Fit>
          <QrScan />
        </div>
      </div>
      <div className="mb-[2px] flex flex-1 flex-col bg-[#eeeeee] px-[26px]">
        <div className="mt-[40px] flex h-[36px] items-center">
          <Fit w={84} className="ml-[1px] text-[30.5px] leading-none font-semibold text-black">Hello</Fit>
        </div>
        <div className="mt-[13px] flex h-[30px] items-center">
          <Fit w={211} className="ml-[2px] text-[24.5px] leading-none text-[#0c0c0c]">+49 176 21381390</Fit>
        </div>
        <div className="mt-[38.5px] flex h-[74.5px] items-center justify-center rounded-[13px] bg-white shadow-[0_10px_26px_rgba(0,0,0,0.14)]">
          <Fit w={325} className="pt-[1px] text-[24.5px] leading-none text-[#0c0c0c]">Complete Account Setup</Fit>
        </div>
      </div>
    </Phone>
  );
}

export default function App() {
  return (
    <div className="flex h-[1926px] w-[4096px] items-start gap-[238px] overflow-hidden bg-[#5c6fd4] pt-[186px] pl-[241px] font-['Inter',sans-serif]">
      <SignIn />
      <CreateAccount />
      <Otp />
      <Home />
    </div>
  );
}
